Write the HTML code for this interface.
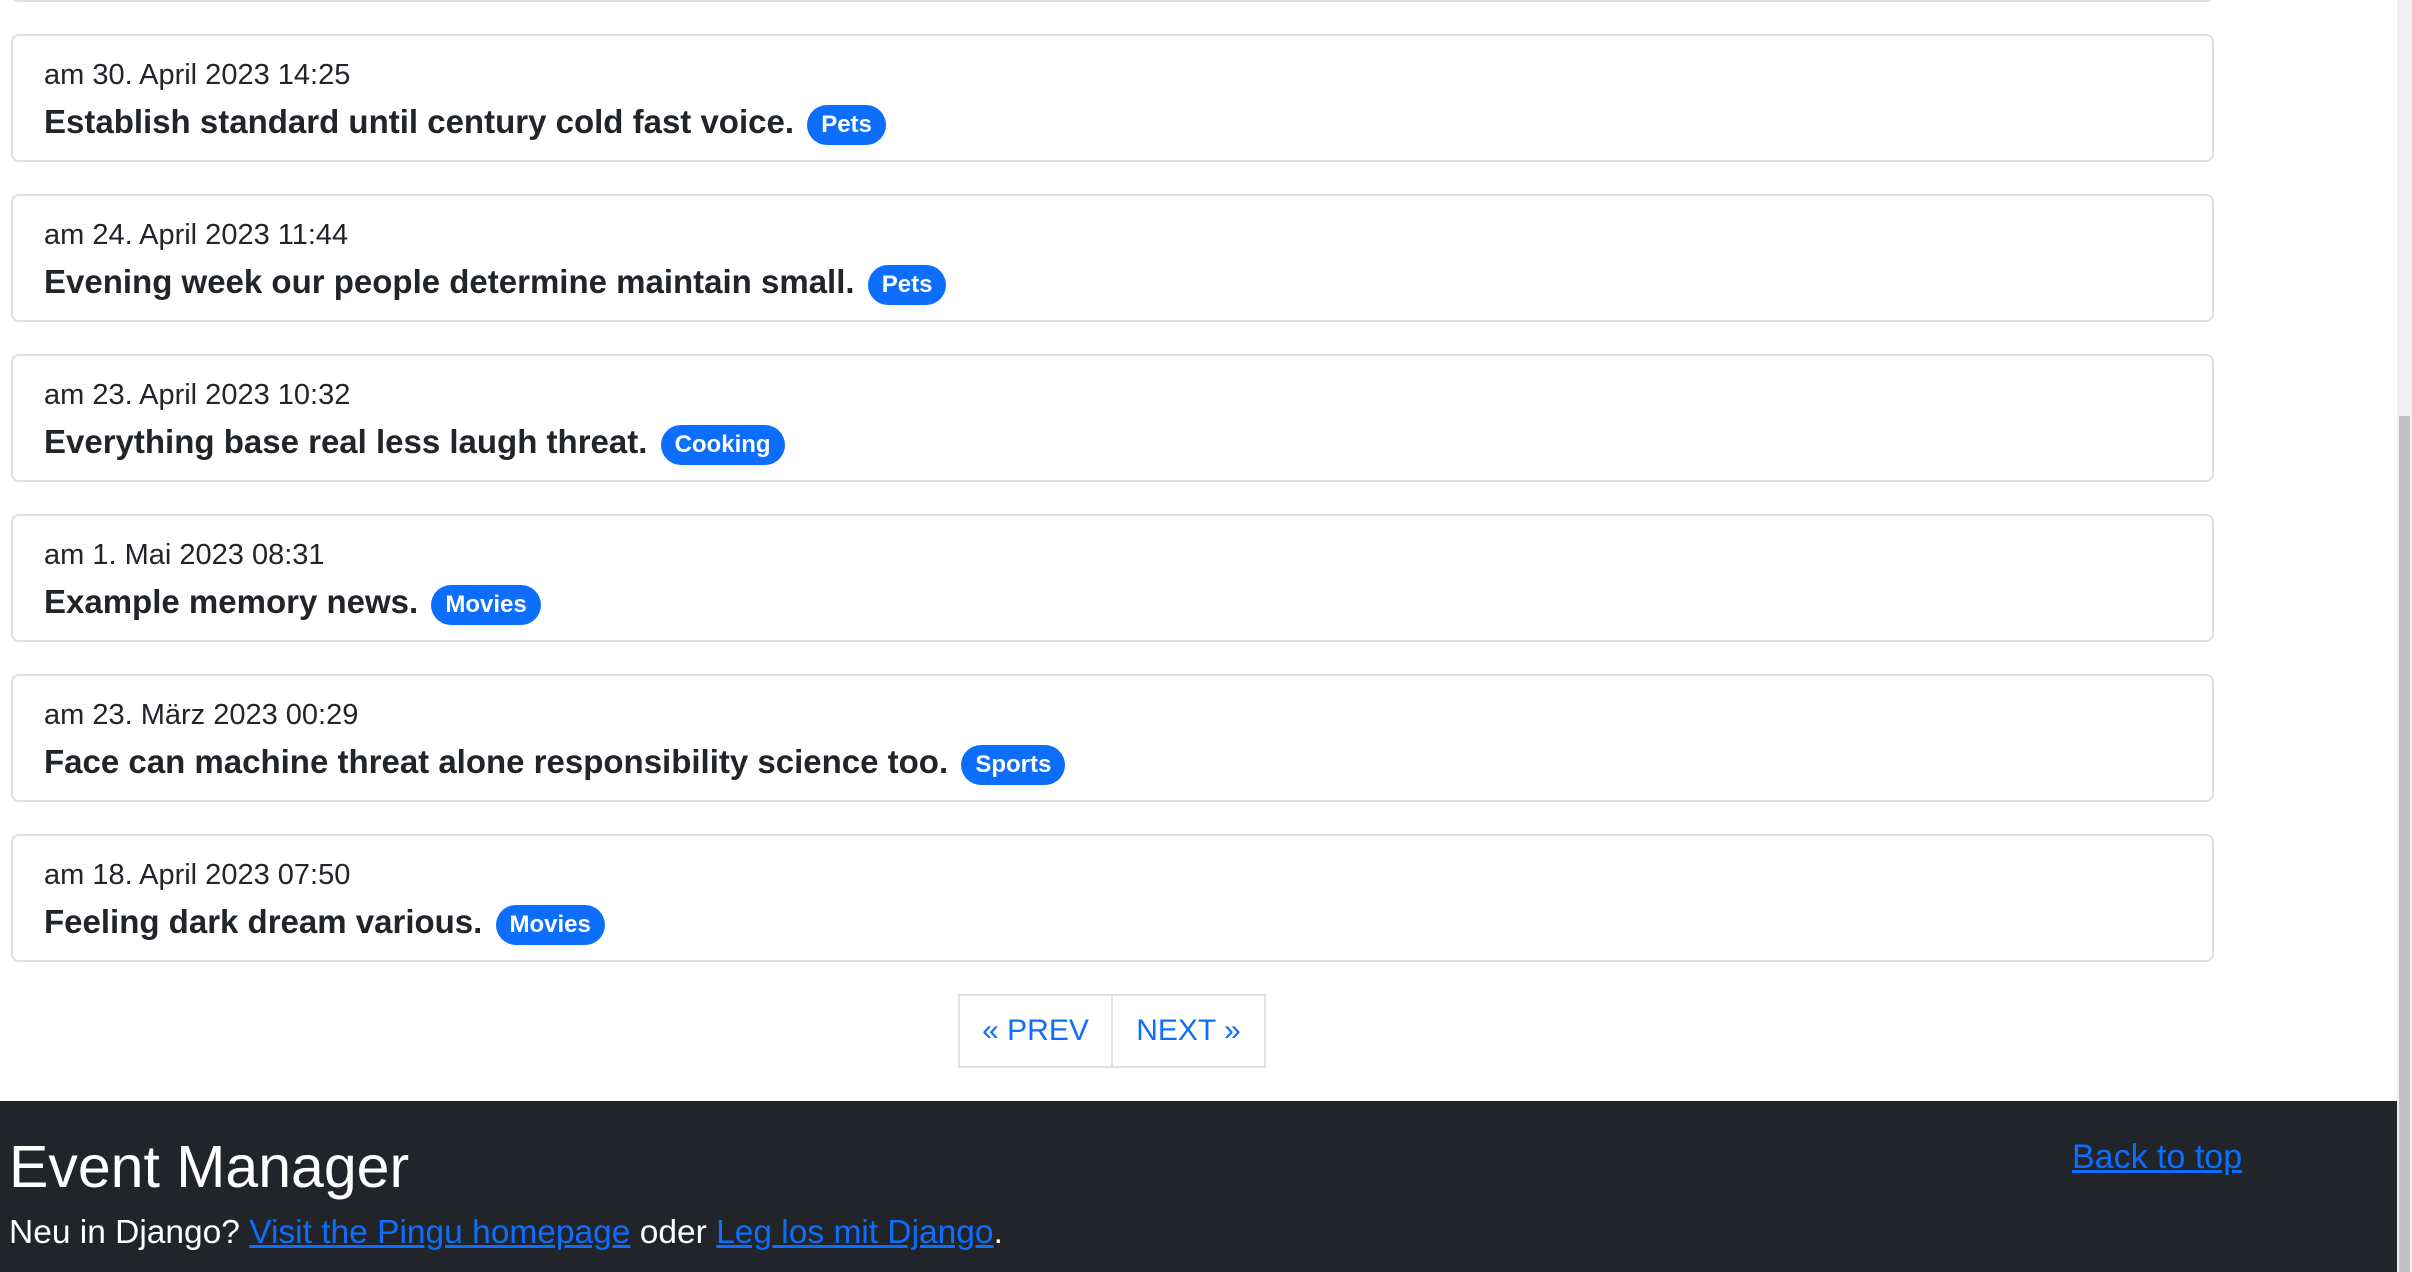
<!DOCTYPE html>
<html><head><meta charset="utf-8"><style>
*{box-sizing:border-box;margin:0;padding:0}
body{width:2412px;height:1272px;overflow:hidden;background:#fff;font-family:"Liberation Sans","DejaVu Sans",sans-serif;color:#212529;position:relative}
.card{position:absolute;left:11px;width:2203px;height:128px;border:2px solid #dfdfdf;border-radius:8px;background:#fff}
.d{position:absolute;left:31px;top:22px;font-size:29px;line-height:34px}
.t{position:absolute;left:31px;top:65px;font-size:33px;font-weight:bold;line-height:42px;white-space:nowrap}
.b{display:inline-block;background:#0d6efd;color:#fff;font-size:24px;font-weight:bold;height:40px;line-height:40px;padding:0 14px;border-radius:20px;vertical-align:middle;margin-left:4px;position:relative;top:1px}
.pg{position:absolute;top:994px;height:74px;border:2px solid #dee2e6;color:#0d6efd;font-size:30px;line-height:70px;text-align:center}
footer{position:absolute;left:0;top:1101px;width:2397px;height:171px;background:#212529;color:#fff}
a{color:#0d6efd;text-decoration:underline}
.sb{position:absolute;right:0;top:0;width:15px;height:1272px;background:#f1f1f1}
.th{position:absolute;right:2px;top:416px;width:11px;height:856px;background:#c1c1c1}
</style></head><body>
<div class="card" style="top:-126px"></div>
<div class="card" style="top:34px"><div class="d">am 30. April 2023 14:25</div><div class="t">Establish standard until century cold fast voice. <span class="b">Pets</span></div></div>
<div class="card" style="top:194px"><div class="d">am 24. April 2023 11:44</div><div class="t">Evening week our people determine maintain small. <span class="b">Pets</span></div></div>
<div class="card" style="top:354px"><div class="d">am 23. April 2023 10:32</div><div class="t">Everything base real less laugh threat. <span class="b">Cooking</span></div></div>
<div class="card" style="top:514px"><div class="d">am 1. Mai 2023 08:31</div><div class="t">Example memory news. <span class="b">Movies</span></div></div>
<div class="card" style="top:674px"><div class="d">am 23. März 2023 00:29</div><div class="t">Face can machine threat alone responsibility science too. <span class="b">Sports</span></div></div>
<div class="card" style="top:834px"><div class="d">am 18. April 2023 07:50</div><div class="t">Feeling dark dream various. <span class="b">Movies</span></div></div>
<div class="pg" style="left:958px;width:155px">« PREV</div>
<div class="pg" style="left:1111px;width:155px">NEXT »</div>
<footer>
<div style="position:absolute;left:9px;top:30px;font-size:59px;line-height:72px">Event Manager</div>
<div style="position:absolute;left:9px;top:111px;font-size:33.5px;line-height:42px;white-space:nowrap">Neu in Django? <a>Visit the Pingu homepage</a> oder <a>Leg los mit Django</a>.</div>
<div style="position:absolute;left:2072px;top:35px;font-size:34px;line-height:42px"><a>Back to top</a></div>
</footer>
<div class="sb"><div class="th"></div></div>
</body></html>
